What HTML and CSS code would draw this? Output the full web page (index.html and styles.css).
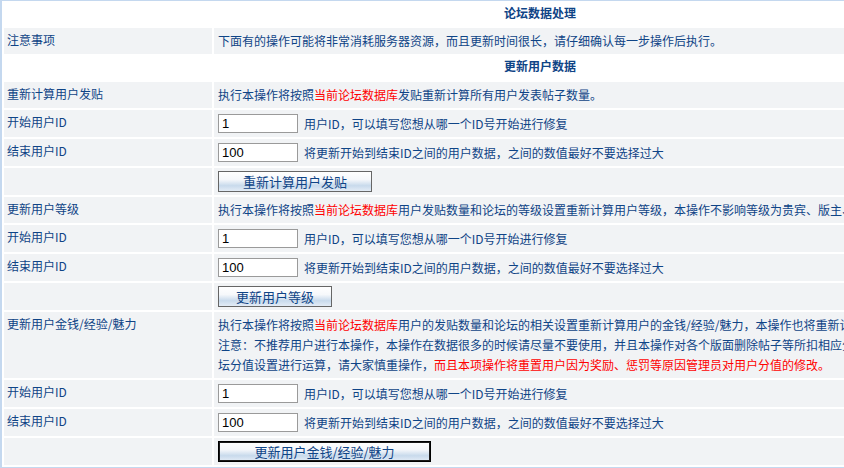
FILE: index.html
```html
<!DOCTYPE html>
<html lang="zh-CN">
<head>
<meta charset="utf-8">
<title>论坛数据处理</title>
<link rel="stylesheet" href="styles.css">
</head>
<body>
<table class="grid">
  <colgroup><col class="col-label"><col class="col-body"></colgroup>
  <tr><th colspan="2" class="hd hd-top">论坛数据处理</th></tr>
  <tr>
    <td class="lbl">注意事项</td>
    <td class="txt">下面有的操作可能将非常消耗服务器资源，而且更新时间很长，请仔细确认每一步操作后执行。</td>
  </tr>
  <tr><th colspan="2" class="hd">更新用户数据</th></tr>

  <tr>
    <td class="lbl">重新计算用户发贴</td>
    <td class="txt">执行本操作将按照<span class="red">当前论坛数据库</span>发贴重新计算所有用户发表帖子数量。</td>
  </tr>
  <tr>
    <td class="lbl">开始用户ID</td>
    <td class="ctl"><div class="field"><input class="inp" type="text" value="1"><span>用户ID，可以填写您想从哪一个ID号开始进行修复</span></div></td>
  </tr>
  <tr>
    <td class="lbl">结束用户ID</td>
    <td class="ctl"><div class="field"><input class="inp" type="text" value="100"><span>将更新开始到结束ID之间的用户数据，之间的数值最好不要选择过大</span></div></td>
  </tr>
  <tr>
    <td class="lbl"></td>
    <td class="act"><div class="actions"><button class="btn btn-posts" type="button">重新计算用户发贴</button></div></td>
  </tr>

  <tr>
    <td class="lbl">更新用户等级</td>
    <td class="txt">执行本操作将按照<span class="red">当前论坛数据库</span>用户发贴数量和论坛的等级设置重新计算用户等级，本操作不影响等级为贵宾、版主、总版主的数据。</td>
  </tr>
  <tr>
    <td class="lbl">开始用户ID</td>
    <td class="ctl"><div class="field"><input class="inp" type="text" value="1"><span>用户ID，可以填写您想从哪一个ID号开始进行修复</span></div></td>
  </tr>
  <tr>
    <td class="lbl">结束用户ID</td>
    <td class="ctl"><div class="field"><input class="inp" type="text" value="100"><span>将更新开始到结束ID之间的用户数据，之间的数值最好不要选择过大</span></div></td>
  </tr>
  <tr>
    <td class="lbl"></td>
    <td class="act"><div class="actions"><button class="btn btn-level" type="button">更新用户等级</button></div></td>
  </tr>

  <tr>
    <td class="lbl">更新用户金钱/经验/魅力</td>
    <td class="txt">执行本操作将按照<span class="red">当前论坛数据库</span>用户的发贴数量和论坛的相关设置重新计算用户的金钱/经验/魅力，本操作也将重新计算贵宾、版主、总版主的数据<br>注意：不推荐用户进行本操作，本操作在数据很多的时候请尽量不要使用，并且本操作对各个版面删除帖子等所扣相应分值不做任何运算，只是按照发贴数量和论坛分值设置进行运算，请大家慎重操作，<span class="red">而且本项操作将重置用户因为奖励、惩罚等原因管理员对用户分值的修改。</span></td>
  </tr>
  <tr>
    <td class="lbl">开始用户ID</td>
    <td class="ctl"><div class="field"><input class="inp" type="text" value="1"><span>用户ID，可以填写您想从哪一个ID号开始进行修复</span></div></td>
  </tr>
  <tr>
    <td class="lbl">结束用户ID</td>
    <td class="ctl"><div class="field"><input class="inp" type="text" value="100"><span>将更新开始到结束ID之间的用户数据，之间的数值最好不要选择过大</span></div></td>
  </tr>
  <tr>
    <td class="lbl"></td>
    <td class="act"><div class="actions"><button class="btn btn-money" type="button">更新用户金钱/经验/魅力</button></div></td>
  </tr>
</table>
</body>
</html>
```

FILE: styles.css
```css
html, body {
  margin: 0;
}

body {
  background: #c4d8ef;
  padding: 1px 0 0 2px;
  overflow: hidden;
  font-family: "Noto Sans CJK SC", "Noto Sans", sans-serif;
  font-size: 12px;
  color: #0f4486;
}

.grid {
  width: 1076px;
  table-layout: fixed;
  border-collapse: separate;
  border-spacing: 2px;
  background: #ffffff;
}

.col-label {
  width: 208px;
}

.col-body {
  width: 862px;
}

.hd {
  background: #ffffff;
  font-weight: bold;
  text-align: center;
  line-height: 16px;
  padding: 2px 4px 6px;
}

.hd-top {
  padding-bottom: 5px;
}

.lbl {
  background: #f1f3f5;
  vertical-align: top;
  line-height: 20px;
  padding: 2px 3px 4px;
  white-space: nowrap;
}

.txt {
  background: #f1f3f5;
  vertical-align: middle;
  line-height: 20px;
  padding: 3px 4px;
}

.red {
  color: #ff0000;
}

.ctl {
  background: #f1f3f5;
  padding: 4px 4px;
  vertical-align: middle;
}

.field {
  display: flex;
  align-items: center;
  gap: 6px;
  height: 19px;
  white-space: nowrap;
}

.inp {
  box-sizing: border-box;
  width: 80px;
  height: 19px;
  margin: 0;
  padding: 0 3px;
  border: 1px solid #9a9a9a;
  background: #ffffff;
  color: #000000;
  font-family: "Liberation Sans", sans-serif;
  font-size: 13px;
}

.act {
  background: #f1f3f5;
  padding: 3px 4px;
  vertical-align: middle;
}

.actions {
  display: flex;
  align-items: center;
  height: 21px;
}

.btn {
  box-sizing: border-box;
  height: 21px;
  margin: 0;
  padding: 0;
  border: 1px solid #666666;
  background: linear-gradient(#ffffff 0%, #f6f8fb 40%, #c8daec 72%, #e3ecf6 100%);
  color: #0f4486;
  font-family: "Noto Sans CJK SC", sans-serif;
  font-size: 13px;
  line-height: 19px;
}

.btn-posts {
  width: 154px;
}

.btn-level {
  width: 114px;
}

.btn-money {
  width: 213px;
  border-color: #000000;
  box-shadow: inset 0 0 0 1px #1a1a1a;
}
```
